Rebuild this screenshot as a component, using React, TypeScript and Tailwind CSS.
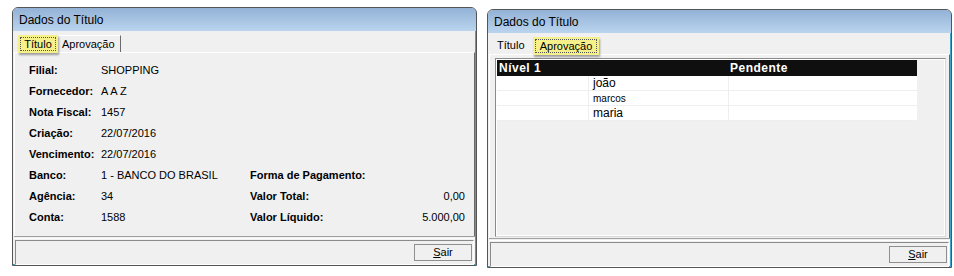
import type { ReactNode } from 'react';

const font = { fontFamily: '"Liberation Sans", Arial, sans-serif' };

function Window({ children, className = '' }: { children: ReactNode; className?: string }) {
  return (
    <div className={`w-[465px] h-[259px] flex flex-col rounded-t-[6px] border border-[#555] bg-[#f0f0f0] shadow-[inset_-1px_-1px_0_#3fa3cc] overflow-hidden ${className}`}>
      <div className="h-[23px] shrink-0 flex items-center pl-[6px] text-[12px] text-black bg-gradient-to-b from-[#93b2d6] to-[#bad4ee]">
        Dados do Título
      </div>
      {children}
    </div>
  );
}

function Footer() {
  return (
    <div className="shrink-0 mx-[1px] border-t border-[#a0a0a0] pt-[1px]">
      <div className="border-t border-white h-[1px]" />
      <div className="mx-[1px] mt-[1px] h-[25px] border border-[#8a8a8a] border-r-white border-b-white flex items-center justify-end pr-[1px]">
        <button className="w-[58px] h-[17px] border border-[#8f8f8f] bg-[#f0f0f0] text-[11px] leading-none text-black flex items-center justify-center">
          <span><span className="underline">S</span>air</span>
        </button>
      </div>
    </div>
  );
}

const rows: [string, string][] = [
  ['Filial:', 'SHOPPING'],
  ['Fornecedor:', 'A A Z'],
  ['Nota Fiscal:', '1457'],
  ['Criação:', '22/07/2016'],
  ['Vencimento:', '22/07/2016'],
  ['Banco:', '1 - BANCO DO BRASIL'],
  ['Agência:', '34'],
  ['Conta:', '1588'],
];

const right: Record<number, [string, string]> = {
  5: ['Forma de Pagamento:', ''],
  6: ['Valor Total:', '0,00'],
  7: ['Valor Líquido:', '5.000,00'],
};

function TituloWindow() {
  return (
    <Window className="mt-[7px]">
      <div className="h-[21px] shrink-0 flex items-end pl-[5px]">
        <div className="h-[18px] w-[40px] bg-[#f5f08a] shadow-[1px_2px_2px_rgba(0,0,0,0.35)] p-[2px] mb-[-1px] relative z-10">
          <div className="h-full border border-dotted border-[#555] flex items-center justify-center text-[11px]">Título</div>
        </div>
        <div className="h-[17px] w-[63px] border-t border-white border-r border-r-[#6b6b6b] flex items-center pl-[4px] text-[11px]">Aprovação</div>
      </div>
      <div className="flex-1 mx-[1px] border-t border-l border-white border-r border-r-[#696969] pt-[7px] pl-[14px] pr-[9px]">
        {rows.map(([l, v], i) => (
          <div key={l} className="h-[21px] flex items-center text-[11px] text-black">
            <div className="w-[221px] flex">
              <span className="w-[72px] font-bold">{l}</span>
              <span>{v}</span>
            </div>
            {right[i] && (
              <div className="flex-1 flex justify-between">
                <span className="font-bold">{right[i][0]}</span>
                <span>{right[i][1]}</span>
              </div>
            )}
          </div>
        ))}
      </div>
      <Footer />
    </Window>
  );
}

const names = [
  { n: 'joão', c: 'text-[12px]' },
  { n: 'marcos', c: 'text-[10px]' },
  { n: 'maria', c: 'text-[12px]' },
];

function AprovacaoWindow() {
  return (
    <Window className="mt-[9px]">
      <div className="h-[21px] shrink-0 flex items-end pl-[9px]">
        <div className="h-[17px] w-[36px] flex items-center text-[11px]">Título</div>
        <div className="h-[18px] w-[66px] bg-[#f5f08a] shadow-[1px_2px_2px_rgba(0,0,0,0.35)] p-[2px] mb-[-1px] relative z-10">
          <div className="h-full border border-dotted border-[#555] flex items-center justify-center text-[11px]">Aprovação</div>
        </div>
      </div>
      <div className="flex-1 mx-[1px] border-t border-l border-white border-r border-r-[#696969] pt-[3px] pl-[5px] pr-[3px] pb-[1px] flex">
        <div className="flex-1 border border-[#8a8a8a] border-r-[#d8d8d8] border-b-[#d8d8d8] flex flex-col">
          <div className="border border-white flex-1 pr-[27px]">
            <div className="h-[16px] bg-[#0f0f0f] text-white font-bold text-[12px] tracking-[0.5px] flex items-center">
              <span className="w-[232px] pl-[2px]">Nível 1</span>
              <span className="pl-[1px]">Pendente</span>
            </div>
            {names.map(r => (
              <div key={r.n} className="h-[15px] bg-white flex border-b border-[#eeeeee]">
                <div className="w-[92px] border-r border-[#eeeeee]" />
                <div className={`w-[140px] border-r border-[#eeeeee] pl-[4px] flex items-center ${r.c}`}>{r.n}</div>
                <div className="flex-1" />
              </div>
            ))}
          </div>
        </div>
      </div>
      <Footer />
    </Window>
  );
}

export default function App() {
  return (
    <div className="w-[954px] h-[276px] bg-white flex items-start gap-[10px] pl-[12px]" style={font}>
      <TituloWindow />
      <AprovacaoWindow />
    </div>
  );
}
